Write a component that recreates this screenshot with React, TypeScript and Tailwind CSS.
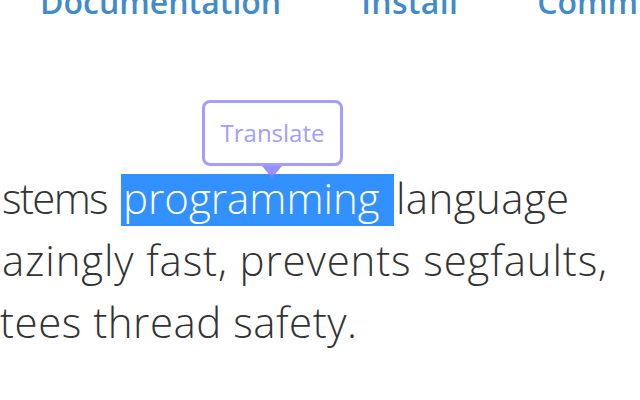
export default function App() {
  return (
    <div
      className="relative h-[400px] w-[640px] overflow-hidden bg-white"
      style={{ fontFamily: '"Open Sans", "Noto Sans", sans-serif' }}
    >
      {/* Top nav (cut off by the viewport) */}
      <nav className="-mt-[14px] flex gap-[80px] whitespace-nowrap pl-[40px] text-[32px] font-semibold leading-[32px] text-[#428bca]">
        <a className="w-[242px]">Documentation</a>
        <a className="w-[96px] tracking-[0.01em]">Install</a>
        <a>Community</a>
      </nav>

      {/* Hero text */}
      <div className="mt-[149px] whitespace-nowrap text-[42px] font-light leading-[62px] text-[#333]">
        <div className="pl-[2px]">
          <span className="tracking-[-0.04em]">stems</span>
          <span className="ml-[14px] inline-block h-[52px] w-[273px] bg-[#3390ff] pl-[2px] leading-[48px] text-white">
            programming
          </span>
          <span className="pl-[2px] tracking-[0.01em]">language</span>
        </div>
        <div className="pl-[2px] tracking-[0.02em]">azingly fast, prevents segfaults,</div>
        <div className="tracking-[0.012em]">tees thread safety.</div>
      </div>

      {/* Translate tooltip */}
      <div className="absolute left-[202px] top-[100px] flex h-[66px] w-[141px] items-center justify-center rounded-[8px] border-[3px] border-[#a49cff] bg-white text-[24px] text-[#a49cff]">
        Translate
      </div>
      <div className="absolute left-[262px] top-[166px] h-0 w-0 border-x-[10px] border-t-[12px] border-x-transparent border-t-[#8a7dff] opacity-85" />
    </div>
  );
}
